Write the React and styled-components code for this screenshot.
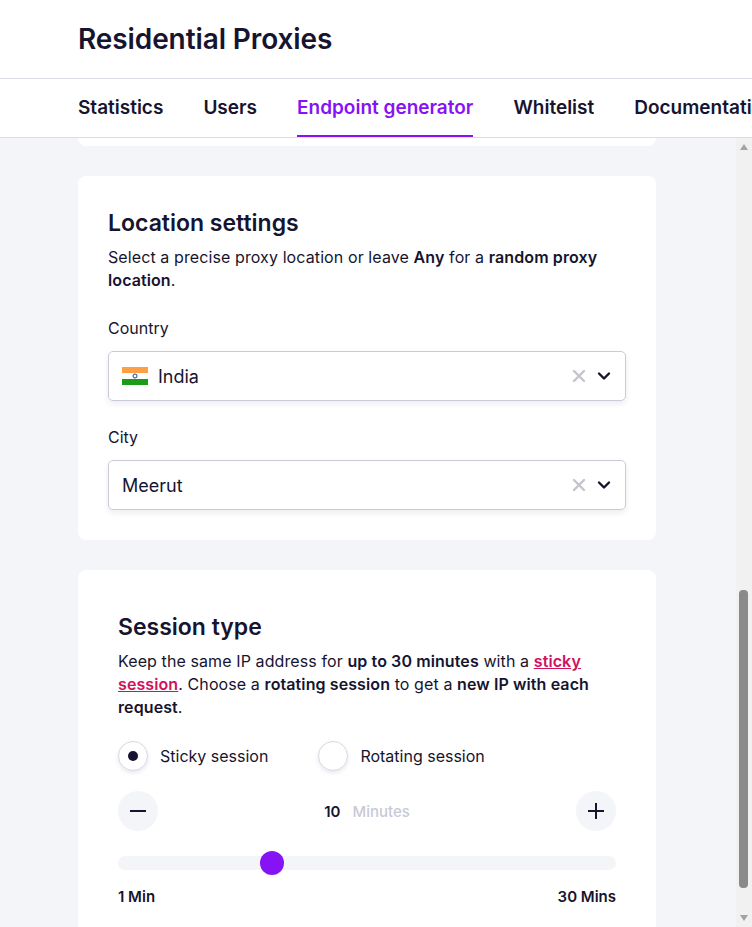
import React from "react";
import styled, { createGlobalStyle } from "styled-components";

const G = createGlobalStyle`
  body{margin:0;font-family:Inter,"Noto Sans",sans-serif;color:#16142f;background:#fff;}
  *{box-sizing:border-box;}
`;
const Page = styled.div`width:752px;height:927px;overflow:hidden;display:flex;flex-direction:column;`;
const Header = styled.div`height:79px;border-bottom:1px solid #dcdde6;padding:21px 0 0 78px;`;
const Title = styled.h1`margin:0;font-size:28px;line-height:36px;font-weight:600;letter-spacing:-0.1px;`;
const Tabs = styled.div`height:59px;border-bottom:1px solid #dcdde6;display:flex;gap:40px;padding-left:78px;white-space:nowrap;overflow:hidden;`;
const Tab = styled.div`font-size:19px;font-weight:600;padding-top:17px;height:58px;color:${p=>p.$a?"#8613f5":"#16142f"};border-bottom:2px solid ${p=>p.$a?"#8613f5":"transparent"};`;
const Body = styled.div`flex:1;display:flex;background:#f4f5f9;overflow:hidden;`;
const Content = styled.div`flex:1;padding:0 80px 0 78px;display:flex;flex-direction:column;gap:30px;`;
const Card = styled.div`background:#fff;border-radius:8px;padding:${p=>p.$p};flex-shrink:0;`;
const Stub = styled.div`height:8px;background:#fff;border-radius:0 0 8px 8px;flex-shrink:0;`;
const H2 = styled.h2`margin:0 0 8px;font-size:23px;line-height:30px;font-weight:600;`;
const P = styled.p`margin:0;font-size:16px;line-height:23px;letter-spacing:0.1px;b{font-weight:600;}a{color:#d0125e;text-decoration:underline;font-weight:600;}`;
const Label = styled.div`font-size:16px;line-height:20px;margin:${p=>p.$m};`;
const Select = styled.div`height:50px;border:1px solid #c9cbd9;border-radius:5px;box-shadow:0 3px 6px rgba(30,30,80,.08);display:flex;align-items:center;padding:0 13px;gap:10px;font-size:18px;`;
const Grow = styled.span`flex:1;`;
const Radios = styled.div`display:flex;gap:50px;margin-top:22px;`;
const Radio = styled.div`display:flex;align-items:center;gap:12px;font-size:16px;`;
const Circle = styled.div`width:30px;height:30px;border-radius:50%;border:1px solid #d5d7e3;box-shadow:0 2px 4px rgba(30,30,80,.1);display:flex;align-items:center;justify-content:center;&::after{content:"";width:10px;height:10px;border-radius:50%;background:${p=>p.$on?"#16142f":"transparent"};}`;
const Counter = styled.div`display:flex;align-items:center;justify-content:space-between;margin-top:20px;`;
const RoundBtn = styled.div`width:40px;height:40px;border-radius:50%;background:#f4f5f9;display:flex;align-items:center;justify-content:center;`;
const Value = styled.div`font-size:15px;font-weight:600;b{color:#c8c9d4;font-weight:500;margin-left:12px;}`;
const Track = styled.div`position:relative;height:14px;border-radius:7px;background:#f4f5f9;margin-top:25px;`;
const Thumb = styled.div`position:absolute;top:-5px;width:24px;height:24px;border-radius:50%;background:#8613f5;`;
const Ends = styled.div`display:flex;justify-content:space-between;font-size:15px;line-height:20px;font-weight:600;margin-top:17px;`;
const Bar = styled.div`width:16px;background:#f1f1f1;position:relative;`;
const ThumbS = styled.div`position:absolute;left:3px;width:9px;border-radius:4px;background:#8a8a8a;`;
const Arrow = styled.div`position:absolute;left:4px;width:0;height:0;border-left:4px solid transparent;border-right:4px solid transparent;`;

const Chev = () => <svg width="16" height="16" viewBox="0 0 16 16"><path d="M3 5.5l5 5 5-5" fill="none" stroke="#16142f" strokeWidth="2.4" strokeLinecap="round" strokeLinejoin="round"/></svg>;
const X = () => <svg width="14" height="14" viewBox="0 0 14 14"><path d="M2 2l10 10M12 2L2 12" stroke="#c3c4cc" strokeWidth="2.4" strokeLinecap="round"/></svg>;
const Flag = () => <svg width="26" height="18" viewBox="0 0 26 18"><rect width="26" height="6" fill="#ff9f45"/><rect y="6" width="26" height="6" fill="#fff"/><rect y="12" width="26" height="6" fill="#1a9c17"/><circle cx="13" cy="9" r="2" fill="none" stroke="#1e3c9a" strokeWidth="1"/></svg>;

export default function App(){
  return <Page><G/>
    <Header><Title>Residential Proxies</Title></Header>
    <Tabs>{["Statistics","Users","Endpoint generator","Whitelist","Documentation"].map(t=><Tab key={t} $a={t==="Endpoint generator"}>{t}</Tab>)}</Tabs>
    <Body>
      <Content>
        <Stub/>
        <Card $p="32px 30px 30px">
          <H2>Location settings</H2>
          <P>Select a precise proxy location or leave <b>Any</b> for a <b>random proxy location</b>.</P>
          <Label $m="26px 0 13px">Country</Label>
          <Select><Flag/><Grow>India</Grow><X/><Chev/></Select>
          <Label $m="26px 0 13px">City</Label>
          <Select><Grow>Meerut</Grow><X/><Chev/></Select>
        </Card>
        <Card $p="42px 40px 60px">
          <H2>Session type</H2>
          <P>Keep the same IP address for <b>up to 30 minutes</b> with a <a>sticky session</a>. Choose a <b>rotating session</b> to get a <b>new IP with each request</b>.</P>
          <Radios>
            <Radio><Circle $on/>Sticky session</Radio>
            <Radio><Circle/>Rotating session</Radio>
          </Radios>
          <Counter>
            <RoundBtn><svg width="18" height="18"><path d="M1 9h16" stroke="#16142f" strokeWidth="2"/></svg></RoundBtn>
            <Value>10<b>Minutes</b></Value>
            <RoundBtn><svg width="18" height="18"><path d="M1 9h16M9 1v16" stroke="#16142f" strokeWidth="2"/></svg></RoundBtn>
          </Counter>
          <Track><Thumb style={{left:"142px"}}/></Track>
          <Ends><span>1 Min</span><span>30 Mins</span></Ends>
        </Card>
      </Content>
      <Bar>
        <Arrow style={{top:6,borderBottom:"6px solid #a3a3a3"}}/>
        <ThumbS style={{top:452,height:298}}/>
        <Arrow style={{bottom:6,borderTop:"6px solid #a3a3a3"}}/>
      </Bar>
    </Body>
  </Page>;
}
